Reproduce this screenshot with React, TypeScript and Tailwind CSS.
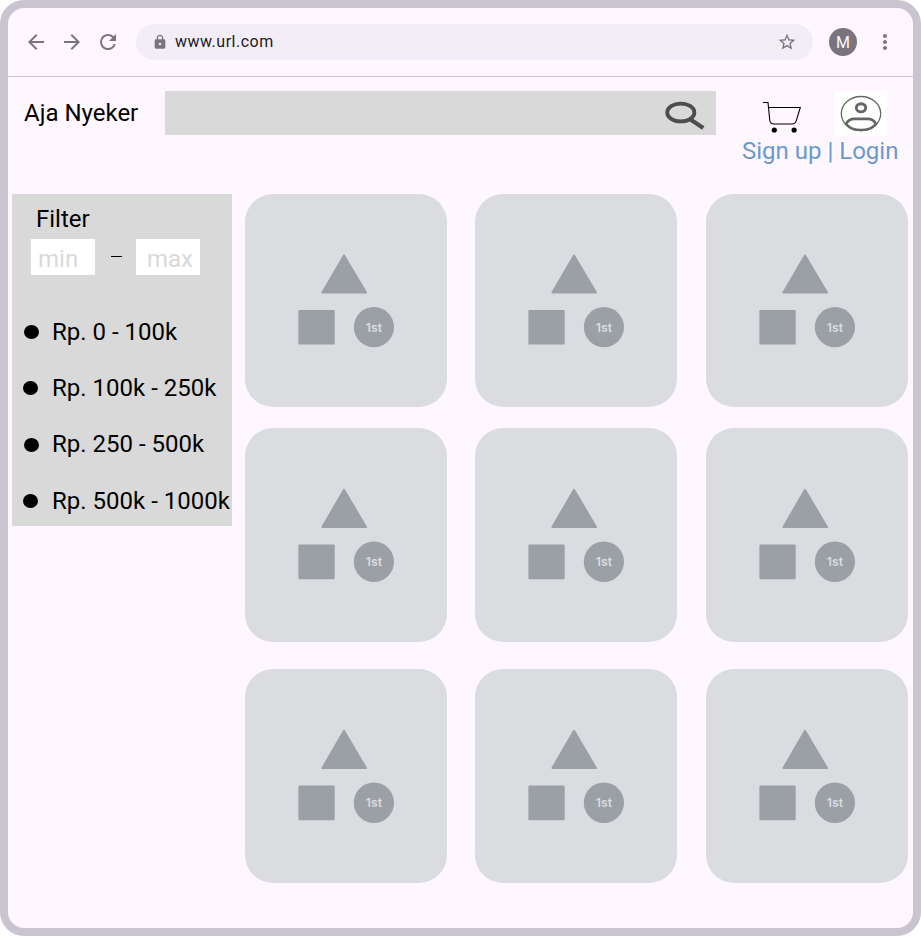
import React from 'react';

const icon = 'shrink-0 fill-[#79747e]';

function Toolbar() {
  return (
    <div className="flex h-[69px] shrink-0 items-center border-b border-[#cac4d0] pl-4 pr-4">
      <svg className={`${icon} size-6`} viewBox="0 0 24 24">
        <path d="M20 11H7.83l5.59-5.59L12 4l-8 8 8 8 1.41-1.41L7.83 13H20v-2z" />
      </svg>
      <svg className={`${icon} ml-3 size-6`} viewBox="0 0 24 24">
        <path d="M12 4l-1.41 1.41L16.17 11H4v2h12.17l-5.58 5.59L12 20l8-8z" />
      </svg>
      <svg className={`${icon} ml-3 size-6`} viewBox="0 0 24 24">
        <path d="M17.65 6.35A7.958 7.958 0 0 0 12 4a8 8 0 1 0 7.73 10h-2.08A5.99 5.99 0 0 1 12 18c-3.31 0-6-2.69-6-6s2.69-6 6-6c1.66 0 3.14.69 4.22 1.78L13 11h7V4l-2.35 2.35z" />
      </svg>
      <div className="ml-4 flex h-9 w-[677px] items-center rounded-full bg-[#f3edf7] pl-[15.5px] pr-4">
        <svg className={`${icon} size-4`} viewBox="0 0 24 24">
          <path d="M18 8h-1V6c0-2.76-2.24-5-5-5S7 3.24 7 6v2H6c-1.1 0-2 .9-2 2v10c0 1.1.9 2 2 2h12c1.1 0 2-.9 2-2V10c0-1.1-.9-2-2-2zm-6 9c-1.1 0-2-.9-2-2s.9-2 2-2 2 .9 2 2-.9 2-2 2zm3.1-9H8.9V6c0-1.71 1.39-3.1 3.1-3.1s3.1 1.39 3.1 3.1v2z" />
        </svg>
        <span className="ml-[7.5px] flex-1 text-base tracking-[0.5px] text-[#1d1b20]">www.url.com</span>
        <svg className={`${icon} size-5`} viewBox="0 0 24 24">
          <path d="M22 9.24l-7.19-.62L12 2 9.19 8.63 2 9.24l5.46 4.73L5.82 21 12 17.27 18.18 21l-1.63-7.03L22 9.24zM12 15.4l-3.76 2.27 1-4.28-3.32-2.88 4.38-.38L12 6.1l1.71 4.04 4.38.38-3.32 2.88 1 4.28L12 15.4z" />
        </svg>
      </div>
      <div className="ml-4 flex size-7 items-center justify-center rounded-full bg-[#79747e] pt-px text-base leading-none text-[#fef7ff]">
        M
      </div>
      <svg className={`${icon} ml-4 size-6`} viewBox="0 0 24 24">
        <path d="M12 8c1.1 0 2-.9 2-2s-.9-2-2-2-2 .9-2 2 .9 2 2 2zm0 2c-1.1 0-2 .9-2 2s.9 2 2 2 2-.9 2-2-.9-2-2-2zm0 6c-1.1 0-2 .9-2 2s.9 2 2 2 2-.9 2-2-.9-2-2-2z" />
      </svg>
    </div>
  );
}

function Header() {
  return (
    <header className="flex h-[103px] shrink-0 items-start pl-4 pt-[14px]">
      <h1 className="mt-[6px] w-[141px] whitespace-nowrap text-2xl leading-8">Aja Nyeker</h1>
      <div className="flex h-11 w-[551px] items-start justify-end bg-[#d9d9d9] pr-[10px] pt-[9px]">
        <svg className="h-[30px] w-[42px]" viewBox="0 0 42 30" fill="none" stroke="#4d4d4d">
          <ellipse cx="16.8" cy="12.500" rx="13.6" ry="8.900" strokeWidth="3.800" />
          <path d="M26.500 19.500L39.300 28" strokeWidth="4.200" />
        </svg>
      </div>
      <div className="ml-[26px] w-[160px]">
        <div className="flex h-[45px]">
          <svg className="ml-5 mt-[10px] h-[34px] w-10" viewBox="0 0 40 34" fill="none" stroke="#000">
            <path d="M1 1.500h5l1.700 17.200c.3 2.700 1.500 4.300 4.300 4.300h18c2.300 0 3.700-1.200 4.300-3.300L38.300 6.500H6.500" strokeWidth="1.100" />
            <circle cx="12.300" cy="29" r="2.600" fill="#000" stroke="none" />
            <circle cx="32.100" cy="29" r="2.600" fill="#000" stroke="none" />
          </svg>
          <div className="ml-[33px] h-[45px] w-[52px] bg-white">
            <svg className="h-[45px] w-[52px]" viewBox="0 0 52 45" fill="none" stroke="#666">
              <ellipse cx="26" cy="22.600" rx="19.700" ry="17.100" strokeWidth="1.300" />
              <ellipse cx="26" cy="16.800" rx="4.700" ry="4.100" strokeWidth="2.900" />
              <path d="M11 33c2-4 4.300-5.200 8.500-5.200h13C36.700 27.800 39 29 41 33 37.600 37 32.500 39 26 39S14.400 37 11 33z" strokeWidth="2.700" />
            </svg>
          </div>
        </div>
        <a className="block whitespace-nowrap text-2xl leading-[30px] text-[#6a9acd]">Sign up | Login</a>
      </div>
    </header>
  );
}

const ranges = [
  { label: 'Rp. 0 - 100k', dot: 'ml-3', text: '' },
  { label: 'Rp. 100k - 250k', dot: 'ml-[11px]', text: '' },
  { label: 'Rp. 250 - 500k', dot: 'ml-3', text: 'pb-[2px]' },
  { label: 'Rp. 500k - 1000k', dot: 'ml-[11px]', text: '' },
];

function Filter() {
  return (
    <aside className="ml-1 mt-[14px] h-[332px] w-[220px] shrink-0 bg-[#d9d9d9] text-2xl">
      <h2 className="h-[45px] pl-6 pt-[9px] leading-8">Filter</h2>
      <div className="flex h-9 items-start pl-[19px] text-[#d9d9d9]">
        <div className="h-9 w-16 bg-white pl-[7px] leading-[40px]">min</div>
        <div className="ml-4 mt-[17px] h-px w-[11px] bg-black" />
        <div className="ml-[14px] h-9 w-16 bg-white pl-[11px] leading-[40px]">max</div>
      </div>
      <ul className="mt-[29px]">
        {ranges.map((r) => (
          <li key={r.label} className="flex h-[56.33px] items-center whitespace-nowrap">
            <span className="flex w-10">
              <span className={`${r.dot} h-[14px] w-[15px] rounded-[50%] bg-black`} />
            </span>
            <span className={r.text}>{r.label}</span>
          </li>
        ))}
      </ul>
    </aside>
  );
}

function ProductCard({ height }: { height: string }) {
  return (
    <div className={`${height} w-[202px] overflow-hidden rounded-[28px] bg-[#dadce0]`}>
      <svg className={`${height} w-[202px]`} viewBox="0 0 202 213" preserveAspectRatio="none" fill="#9aa0a6">
        <path d="M99 61.500L121 98.600H77.400z" stroke="#9aa0a6" strokeWidth="2" strokeLinejoin="round" />
        <rect x="53.400" y="116" width="36.300" height="34.600" rx="1.200" />
        <circle cx="128.900" cy="133.100" r="20.100" />
        <text x="128.900" y="137.600" textAnchor="middle" fill="#dadce0" fontSize="12.300" className="font-['Inter',sans-serif] font-semibold">
          1st
        </text>
      </svg>
    </div>
  );
}

const rows = [
  { gap: '', height: 'h-[213px]' },
  { gap: 'mt-[21px]', height: 'h-[214px]' },
  { gap: 'mt-[27px]', height: 'h-[214px]' },
];

export default function App() {
  return (
    <div className="flex h-[936px] w-[921px] flex-col overflow-hidden rounded-3xl border-8 border-[#cac4d0] bg-[#fef7ff] font-['Roboto',sans-serif] text-black">
      <Toolbar />
      <Header />
      <main className="flex flex-1 items-start">
        <Filter />
        <div className="ml-[13px] mt-[14px] flex flex-col">
          {rows.map(({ gap, height }, i) => (
            <div key={i} className={`flex ${gap}`}>
              <ProductCard height={height} />
              <div className="ml-7">
                <ProductCard height={height} />
              </div>
              <div className="ml-[29px]">
                <ProductCard height={height} />
              </div>
            </div>
          ))}
        </div>
      </main>
    </div>
  );
}
